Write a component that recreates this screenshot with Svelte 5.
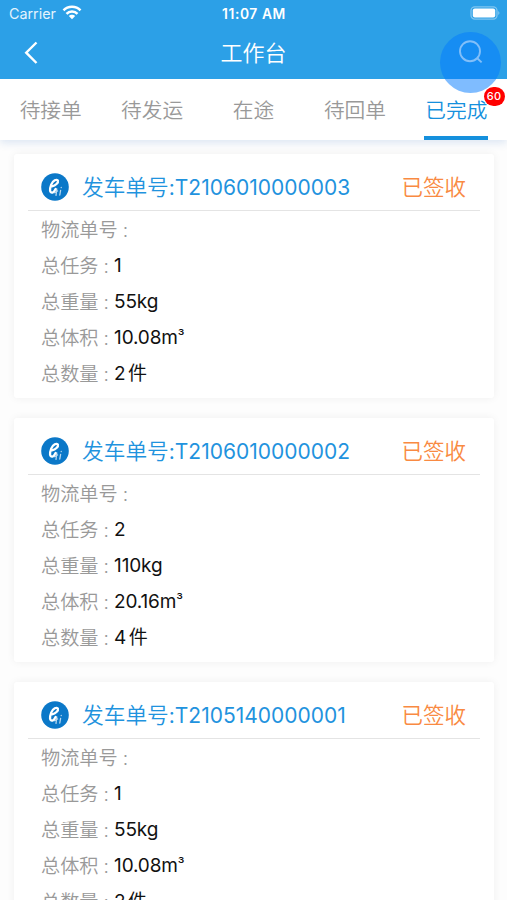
<script>
  const tabs = ['待接单', '待发运', '在途', '待回单', '已完成'];
  const active = 4;
  const orders = [
    { no: 'T2106010000003', tasks: '1', weight: '55kg', volume: '10.08', count: '2' },
    { no: 'T2106010000002', tasks: '2', weight: '110kg', volume: '20.16', count: '4' },
    { no: 'T2105140000001', tasks: '1', weight: '55kg', volume: '10.08', count: '2' }
  ];
</script>

<div class="screen">
  <header>
    <div class="status">
      <div class="carrier">
        <span>Carrier</span>
        <svg width="20" height="15" viewBox="0 0 20 15" fill="none" stroke="#fff" stroke-width="2.5">
          <path d="M1.5 5.4 C6 .5 14 .5 18.5 5.4" />
          <path d="M4.5 8.8 C7.4 5.7 12.6 5.7 15.5 8.8" />
          <path d="M6.8 11.1 C8.5 9.4 11.5 9.4 13.2 11.1 L10 14.3Z" fill="#fff" stroke="none" />
        </svg>
      </div>
      <span class="time">11:07 AM</span>
      <svg class="battery" width="31" height="14" viewBox="0 0 31 14" fill="none">
        <rect x="1" y=".9" width="26" height="12.2" rx="3.8" stroke="#fff" stroke-opacity=".4" stroke-width="1.3" />
        <rect x="2.8" y="2.6" width="22.4" height="8.8" rx="2" fill="#fff" />
        <path d="M28.4 5 Q30.4 7 28.4 9Z" fill="#fff" fill-opacity=".5" />
      </svg>
    </div>
    <div class="nav">
      <svg class="back" width="16" height="24" viewBox="0 0 16 24" fill="none" stroke="#fff" stroke-width="2.4">
        <path d="M13.5 1.5 L3.2 11.7 L13.5 22" />
      </svg>
      <h1>工作台</h1>
      <div class="search">
        <svg width="26" height="26" viewBox="0 0 26 26" fill="none" stroke="#82bff9" stroke-width="1.9">
          <circle cx="12" cy="11.2" r="10" />
          <path d="M19 18 L23.6 22.4" />
        </svg>
      </div>
    </div>
  </header>

  <nav class="tabs">
    {#each tabs as tab, i}
      <div class="tab" class:active={i === active}>
        <span>{tab}</span>
        {#if i === active}<b class="badge">60</b>{/if}
      </div>
    {/each}
  </nav>

  <main>
    {#each orders as order}
      <article>
        <div class="head">
          <svg class="logo" width="28" height="28" viewBox="0 0 28 28" fill="none" stroke="#fff" stroke-linecap="round">
            <circle cx="14" cy="14" r="13.8" fill="#0b78c8" stroke="none" />
            <path d="M11 13.4 C14.5 12.8 17.6 9.6 16.9 7.6 C15.9 5.6 11.8 7.4 10.2 11.7 C8.3 16.6 8.7 20 11.4 19.6 C12.8 19.2 13.8 17.6 14.6 16" stroke-width="2.3" />
            <path d="M15.8 16 L15 22.3 M19.6 17.3 L18.8 22 M12.8 19.8 L16.6 18 M20.2 14.5 L20.3 14.4" stroke-width="1.3" stroke-opacity=".7" />
          </svg>
          <span class="number"><i>发车单号</i>:{order.no}</span>
          <span class="state">已签收</span>
        </div>
        <dl>
          <div><dt>物流单号<s>:</s></dt><dd></dd></div>
          <div><dt>总任务<s>:</s></dt><dd>{order.tasks}</dd></div>
          <div><dt>总重量<s>:</s></dt><dd>{order.weight}</dd></div>
          <div><dt>总体积<s>:</s></dt><dd>{order.volume}m<span class="cubed">³</span></dd></div>
          <div><dt>总数量<s>:</s></dt><dd>{order.count}<span class="unit">件</span></dd></div>
        </dl>
      </article>
    {/each}
  </main>
</div>

<style>
  :global(body) { margin: 0; overflow: hidden; }
  .screen {
    width: 507px; height: 900px; overflow: hidden; display: flex; flex-direction: column;
    background: #fdfdfd; font-family: Inter, "Noto Sans CJK SC", sans-serif;
  }
  header { height: 79px; flex: none; background: #2ca0e7; color: #fff; position: relative; z-index: 3; }
  .status { height: 27px; display: grid; grid-template-columns: 1fr auto 1fr; align-items: center; padding: 0 6px 0 9px; box-sizing: border-box; }
  .carrier { display: flex; align-items: center; gap: 6px; font-size: 14.3px; color: #e4f3fd; }
  .carrier svg { margin-top: -2px; }
  .time { font-size: 13.8px; font-weight: 600; letter-spacing: .6px; margin-left: -2px; }
  .battery { justify-self: end; margin-top: -1px; }
  .nav { height: 52px; display: grid; grid-template-columns: 1fr auto 1fr; align-items: center; }
  .back { margin-left: 23px; margin-top: -1px; }
  h1 { margin: 0; font-size: 22px; font-weight: 350; line-height: 30px; margin-top: -1px; }
  .search {
    position: absolute; left: 440px; top: 31.5px; width: 61px; height: 61px; border-radius: 50%;
    background: rgba(0, 122, 255, .5);
  }
  .search svg { display: block; margin: 8.5px 0 0 18px; }
  .tabs {
    height: 61px; flex: none; display: flex; background: #fff; position: relative; z-index: 2;
    box-shadow: 0 3px 8px rgba(50, 110, 190, .16);
  }
  .tab { flex: 1; display: flex; justify-content: center; position: relative; color: #999; font-size: 20.7px; font-weight: 350; line-height: 64px; }
  .tab span { height: 57px; }
  .active { color: #1590dd; }
  .active span { border-bottom: 4px solid #1590dd; width: 64px; text-align: center; }
  .badge {
    position: absolute; left: 78px; top: 8px; width: 21px; height: 19px; border-radius: 10px;
    background: #f00; color: #fff; font-size: 11px; line-height: 19px; font-weight: 500; text-align: center;
    letter-spacing: .4px;
  }
  main { flex: 1; min-height: 0; padding: 14px 13px 0 14px; display: flex; flex-direction: column; gap: 20px; overflow: hidden; }
  article { height: 244px; flex: none; background: #fff; border-radius: 3px; box-shadow: 0 0 8px rgba(0, 0, 0, .06); }
  .head {
    height: 57px; box-sizing: border-box; margin: 0 14px; padding: 10px 14px 0 13px;
    border-bottom: 1px solid #e4e4e4; display: flex; align-items: center;
  }
  .number { margin-left: 13px; color: #1f93de; font-size: 21px; line-height: 30px; white-space: nowrap; }
  i { font-style: normal; font-size: 21.7px; font-weight: 350; }
  .state { margin-left: auto; color: #f98a42; font-size: 21.5px; font-weight: 350; line-height: 30px; }
  dl { margin: 0; padding: 1px 0 0 27px; }
  dl div { height: 36px; display: flex; align-items: center; line-height: 38px; }
  dt { color: #999; font-size: 19.2px; font-weight: 350; white-space: nowrap; display: flex; }
  s { text-decoration: none; width: 15.5px; text-align: center; }
  dd { margin: 0; color: #111; font-size: 19px; white-space: nowrap; letter-spacing: -.15px; }
  .cubed { font-size: 15px; position: relative; top: -2px; }
  .unit { margin-left: 2.5px; }
</style>
